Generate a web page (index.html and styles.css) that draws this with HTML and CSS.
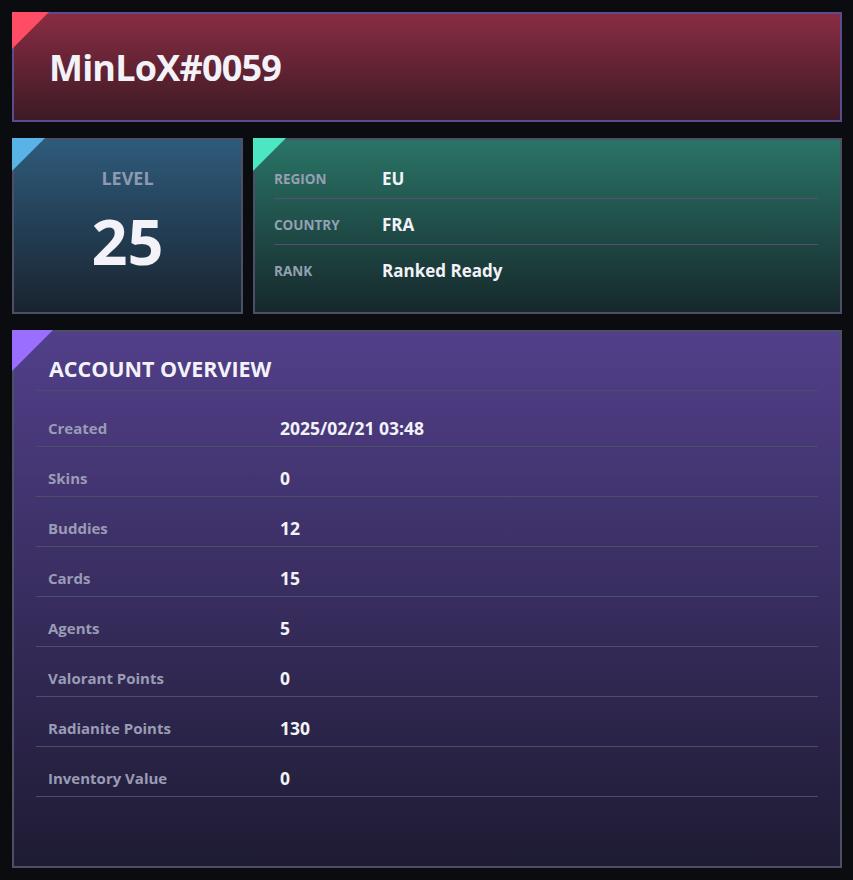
FILE: index.html
```html
<!DOCTYPE html>
<html lang="en">
<head>
  <meta charset="UTF-8">
  <meta name="viewport" content="width=device-width, initial-scale=1.0">
  <title>MinLoX#0059</title>
  <link rel="stylesheet" href="styles.css">
</head>
<body>
  <div class="page">
    <div class="card player">
      <h1>MinLoX#0059</h1>
    </div>

    <div class="stats">
      <div class="card level">
        <div class="level-label">LEVEL</div>
        <div class="level-value">25</div>
      </div>
      <div class="card info">
        <div class="info-row">
          <span class="info-label">REGION</span>
          <span class="info-value">EU</span>
        </div>
        <div class="info-row">
          <span class="info-label">COUNTRY</span>
          <span class="info-value">FRA</span>
        </div>
        <div class="info-row last">
          <span class="info-label">RANK</span>
          <span class="info-value">Ranked Ready</span>
        </div>
      </div>
    </div>

    <div class="card overview">
      <h2>ACCOUNT OVERVIEW</h2>
      <div class="rows">
        <div class="row"><span class="row-label">Created</span><span class="row-value">2025/02/21 03:48</span></div>
        <div class="row"><span class="row-label">Skins</span><span class="row-value">0</span></div>
        <div class="row"><span class="row-label">Buddies</span><span class="row-value">12</span></div>
        <div class="row"><span class="row-label">Cards</span><span class="row-value">15</span></div>
        <div class="row"><span class="row-label">Agents</span><span class="row-value">5</span></div>
        <div class="row"><span class="row-label">Valorant Points</span><span class="row-value">0</span></div>
        <div class="row"><span class="row-label">Radianite Points</span><span class="row-value">130</span></div>
        <div class="row"><span class="row-label">Inventory Value</span><span class="row-value">0</span></div>
      </div>
    </div>
  </div>
</body>
</html>
```

FILE: styles.css
```css
body {
  margin: 0;
  background-color: #0b0c10;
  font-family: 'Open Sans', 'Noto Sans', sans-serif;
  color: #f2f2f8;
}
.page {
  padding: 12px 11px 12px 12px;
  display: flex;
  flex-direction: column;
  gap: 16px;
}
.card {
  position: relative;
  border: 2px solid #4b5067;
  box-sizing: border-box;
}
/* coloured corner flag */
.card::before {
  content: '';
  position: absolute;
  top: -2px;
  left: -2px;
  width: 37px;
  height: 37px;
  clip-path: polygon(0 0, 100% 0, 0 100%);
}

.player {
  height: 110px;
  border-color: #5c4c8e;
  background: linear-gradient(#892c43, #3c1a24);
  padding: 0 35px;
  display: flex;
  align-items: center;
}
.player::before {
  background: #ff4d65;
}
.player h1 {
  margin: 0;
  font-size: 36px;
  font-weight: 700;
  letter-spacing: -0.8px;
}

.stats {
  display: flex;
  gap: 10px;
}
.level {
  width: 231px;
  height: 176px;
  background: linear-gradient(#2e5b7b, #19232f);
  text-align: center;
  padding-top: 26px;
}
.level::before {
  background: #5ab3e6;
  width: 33px;
  height: 33px;
}
.level-label {
  font-size: 18px;
  font-weight: 700;
  color: #8d9ab0;
  line-height: 24px;
}
.level-value {
  font-size: 63px;
  font-weight: 700;
  line-height: 1;
  margin-top: 19px;
}

.info {
  flex: 1;
  height: 176px;
  background: linear-gradient(#2a7466, #16282c);
  padding: 14px 22px 0 19px;
}
.info::before {
  background: #4de6c2;
  width: 33px;
  height: 33px;
}
.info-row {
  display: flex;
  align-items: baseline;
  height: 45px;
  padding-top: 13px;
  box-sizing: border-box;
  border-bottom: 1px solid #5a4b78;
}
.info-row + .info-row {
  height: 46px;
  padding-top: 14px;
}
.info-row.last {
  border-bottom: none;
}
.info-label {
  width: 108px;
  font-size: 13.5px;
  font-weight: 700;
  color: #95a0b3;
  position: relative;
  top: -1px;
}
.info-value {
  font-size: 17px;
  font-weight: 700;
}

.overview {
  height: 538px;
  background: linear-gradient(#523f8a, #1e1b33);
  padding: 23px 22px 0 22px;
}
.overview::before {
  background: #9a6fff;
  width: 41px;
  height: 41px;
}
.overview h2 {
  margin: 0;
  padding: 0 0 8px 13px;
  font-size: 21.5px;
  font-weight: 700;
  line-height: 27px;
  border-bottom: 1px solid #4b5067;
}
.rows {
  margin-top: 6px;
}
.row {
  display: flex;
  align-items: baseline;
  height: 50px;
  padding: 19px 12px 0;
  box-sizing: border-box;
  border-bottom: 1px solid #4b5067;
}
.row-label {
  width: 232px;
  font-size: 15px;
  font-weight: 700;
  color: #9a9cb6;
  position: relative;
  top: -1px;
}
.row-value {
  font-size: 17.5px;
  font-weight: 700;
}
```
